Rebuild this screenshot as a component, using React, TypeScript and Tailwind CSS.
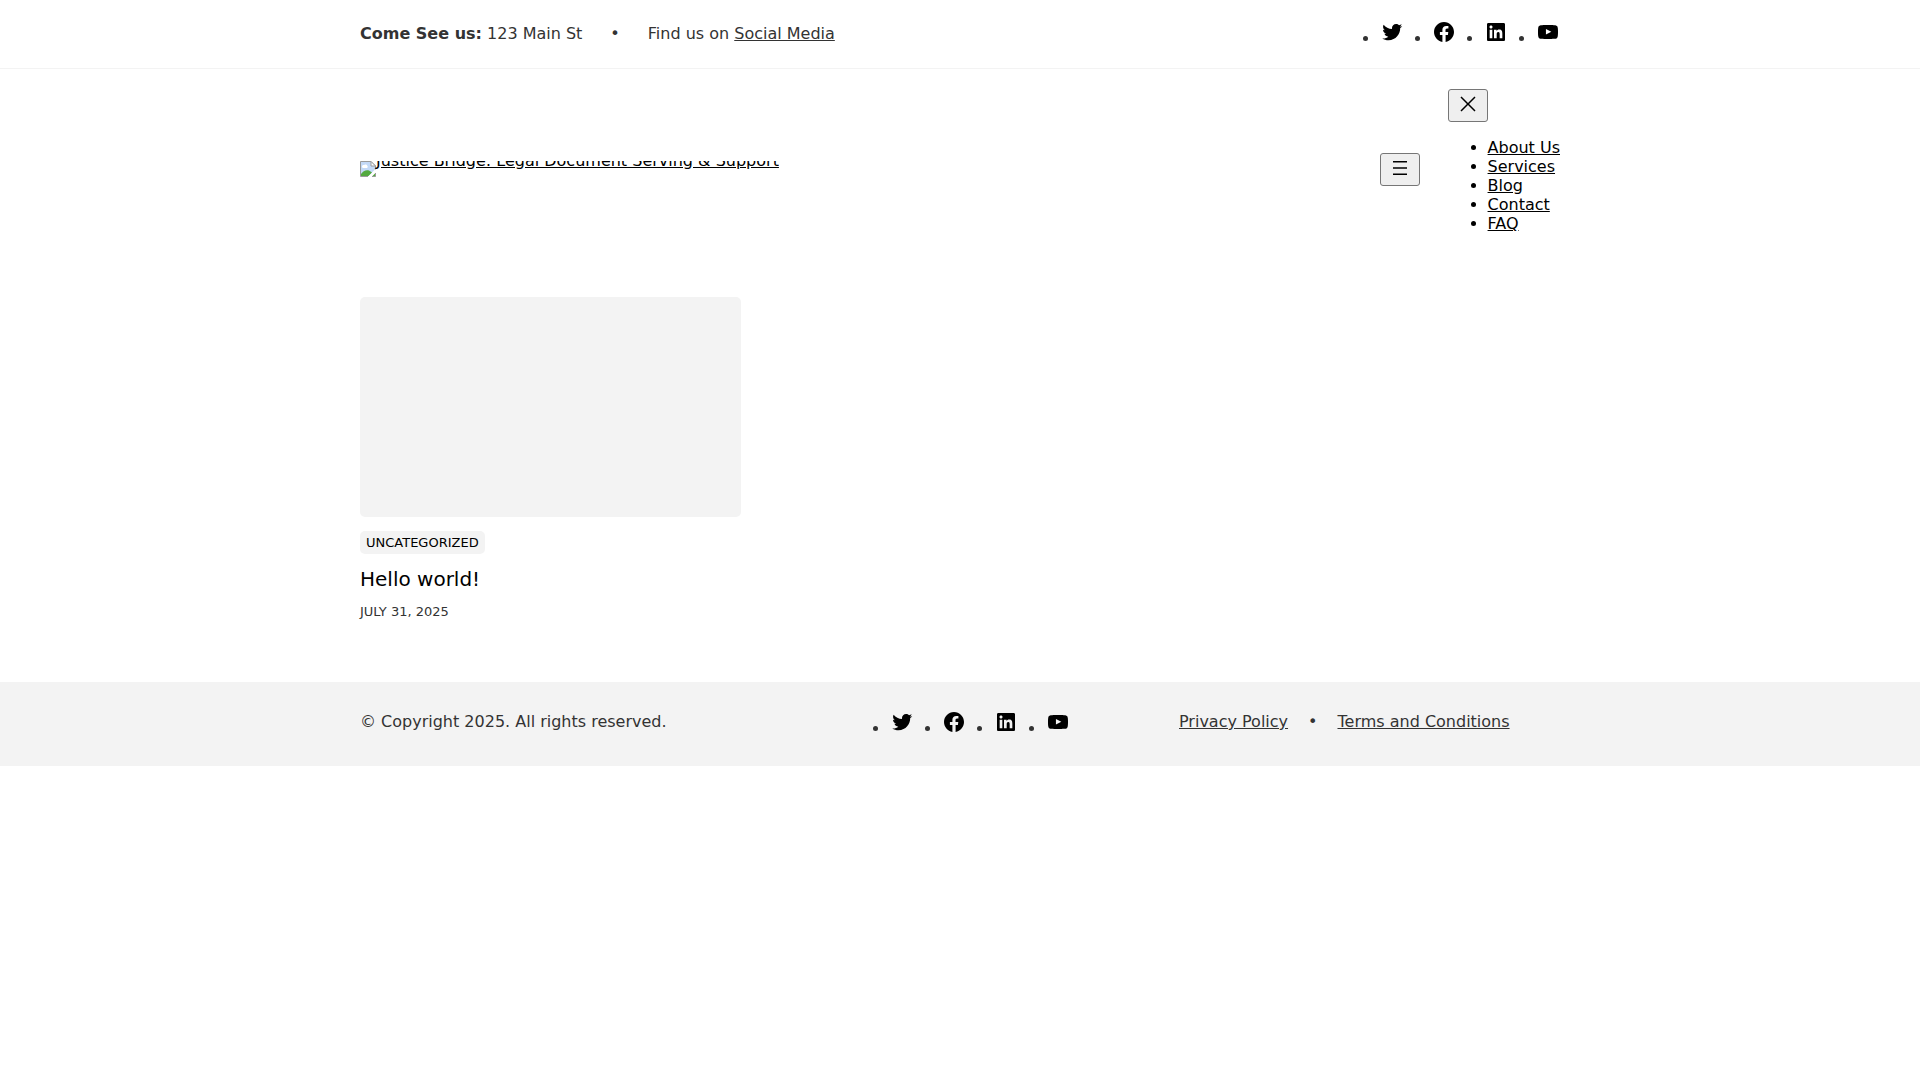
import React from "react";

const socials = [
  {
    name: "Twitter",
    path: "M22.23,5.924c-0.736,0.326-1.527,0.547-2.357,0.646c0.847-0.508,1.498-1.312,1.804-2.27 c-0.793,0.47-1.671,0.812-2.606,0.996C18.324,4.498,17.257,4,16.077,4c-2.266,0-4.103,1.837-4.103,4.103 c0,0.322,0.036,0.635,0.106,0.935C8.67,8.867,5.647,7.234,3.623,4.751C3.27,5.357,3.067,6.062,3.067,6.814 c0,1.424,0.724,2.679,1.825,3.415c-0.673-0.021-1.305-0.206-1.859-0.513c0,0.017,0,0.034,0,0.052c0,1.988,1.414,3.647,3.292,4.023 c-0.344,0.094-0.707,0.144-1.081,0.144c-0.264,0-0.521-0.026-0.772-0.074c0.522,1.63,2.038,2.816,3.833,2.85 c-1.404,1.1-3.174,1.756-5.096,1.756c-0.331,0-0.658-0.019-0.979-0.057c1.816,1.164,3.973,1.843,6.29,1.843 c7.547,0,11.675-6.252,11.675-11.675c0-0.178-0.004-0.355-0.012-0.531C20.985,7.47,21.68,6.747,22.23,5.924z",
  },
  {
    name: "Facebook",
    path: "M12 2C6.5 2 2 6.5 2 12c0 5 3.7 9.1 8.4 9.9v-7H7.9V12h2.5V9.8c0-2.5 1.5-3.9 3.8-3.9 1.1 0 2.2.2 2.2.2v2.5h-1.3c-1.2 0-1.6.8-1.6 1.6V12h2.8l-.4 2.9h-2.3v7C18.3 21.1 22 17 22 12c0-5.5-4.5-10-10-10z",
  },
  {
    name: "LinkedIn",
    path: "M19.7,3H4.3C3.582,3,3,3.582,3,4.3v15.4C3,20.418,3.582,21,4.3,21h15.4c0.718,0,1.3-0.582,1.3-1.3V4.3 C21,3.582,20.418,3,19.7,3z M8.339,18.338H5.667v-8.59h2.672V18.338z M7.004,8.574c-0.857,0-1.549-0.694-1.549-1.548 c0-0.855,0.691-1.548,1.549-1.548c0.854,0,1.547,0.694,1.547,1.548C8.551,7.881,7.858,8.574,7.004,8.574z M18.339,18.338h-2.669 v-4.177c0-0.996-0.017-2.278-1.387-2.278c-1.389,0-1.601,1.086-1.601,2.206v4.249h-2.667v-8.59h2.559v1.174h0.037 c0.356-0.675,1.227-1.387,2.526-1.387c2.703,0,3.203,1.779,3.203,4.092V18.338z",
  },
  {
    name: "YouTube",
    path: "M21.8,8.001c0,0-0.195-1.378-0.795-1.985c-0.76-0.797-1.613-0.801-2.004-0.847c-2.799-0.202-6.997-0.202-6.997-0.202 h-0.009c0,0-4.198,0-6.997,0.202C4.608,5.216,3.756,5.22,2.995,6.016C2.395,6.623,2.2,8.001,2.2,8.001S2,9.62,2,11.238v1.517 c0,1.618,0.2,3.237,0.2,3.237s0.195,1.378,0.795,1.985c0.761,0.797,1.76,0.771,2.205,0.855c1.6,0.153,6.8,0.201,6.8,0.201 s4.203-0.006,7.001-0.209c0.391-0.047,1.243-0.051,2.004-0.847c0.6-0.607,0.795-1.985,0.795-1.985s0.2-1.618,0.2-3.237v-1.517 C22,9.62,21.8,8.001,21.8,8.001z M9.935,14.594l-0.001-5.62l5.404,2.82L9.935,14.594z",
  },
];

const navItems = ["About Us", "Services", "Blog", "Contact", "FAQ"];

function SocialLinks() {
  return (
    <ul className="flex list-disc gap-7">
      {socials.map((s) => (
        <li key={s.name} className="h-7">
          <a href="#" aria-label={s.name} className="text-black">
            <svg viewBox="0 0 24 24" className="inline h-6 w-6 align-baseline" fill="currentColor" aria-hidden="true">
              <path d={s.path} />
            </svg>
          </a>
        </li>
      ))}
    </ul>
  );
}

function IconButton({ label, path }: { label: string; path: string }) {
  return (
    <button
      type="button"
      aria-label={label}
      className="flex h-[33px] w-10 justify-center rounded-[3px] border border-[#767676] bg-[#efefef] pt-0.5 text-black"
    >
      <svg viewBox="0 0 24 24" className="h-6 w-6" fill="currentColor" aria-hidden="true">
        <path d={path} />
      </svg>
    </button>
  );
}

function BrokenImageIcon() {
  return (
    <svg viewBox="0 0 16 16" className="h-4 w-4 shrink-0" aria-hidden="true">
      <path d="M0.5 0.5H11L15.5 5V8L8 15.5H0.5Z" fill="#c3d9f7" />
      <path d="M2 5.5a1.5 1.5 0 0 1 2-1.4 2 2 0 0 1 3.4 1A1.2 1.2 0 0 1 7 7H3a1.5 1.5 0 0 1-1-1.5Z" fill="#fff" />
      <path d="M1 15V13C3 10 6 8.5 9 9.5L12 11.5L8.5 15Z" fill="#53a93f" />
      <path d="M16 8.5V11L11 16H8Z" fill="#fff" />
      <path d="M15.5 12V15.5H12Z" fill="#53a93f" />
      <path d="M8 15.5H0.5V0.5H11L15.5 5V8.5M15.5 12V15.5H12" fill="none" stroke="#9a9a9a" />
      <path d="M11 0.5V5H15.5Z" fill="#fff" stroke="#9a9a9a" />
    </svg>
  );
}

export default function App() {
  return (
    <div className="min-h-screen bg-white font-['DejaVu_Sans',sans-serif] text-base leading-5 text-[#333333]">
      <div className="border-b border-[#f3f3f3]">
        <div className="mx-auto flex max-w-[1200px] items-center justify-between py-5">
          <div className="flex items-center gap-7">
            <p>
              <strong className="font-bold">Come See us:</strong> 123 Main St
            </p>
            <span>•</span>
            <p>
              Find us on{" "}
              <a href="#" className="underline">
                Social Media
              </a>
            </p>
          </div>
          <SocialLinks />
        </div>
      </div>

      <header className="mx-auto flex max-w-[1200px] items-center justify-between py-5 text-black">
        <a href="#" className="flex h-[17px] items-start overflow-hidden leading-[19px]">
          <BrokenImageIcon />
          <span className="-mt-2.5 underline">Justice Bridge: Legal Document Serving &amp; Support</span>
        </a>
        <nav className="flex items-center gap-7">
          <IconButton label="Open menu" path="M5 5v1.5h14V5H5zm0 7.8h14v-1.5H5v1.5zM5 19h14v-1.5H5V19z" />
          <div>
            <IconButton
              label="Close menu"
              path="m13.06 12 6.47-6.47-1.06-1.06L12 10.94 5.53 4.47 4.47 5.53 10.94 12l-6.47 6.47 1.06 1.06L12 13.06l6.47 6.47 1.06-1.06L13.06 12Z"
            />
            <ul className="my-4 list-disc pl-10 leading-[19px]">
              {navItems.map((item) => (
                <li key={item}>
                  <a href="#" className="underline">
                    {item}
                  </a>
                </li>
              ))}
            </ul>
          </div>
        </nav>
      </header>

      <main className="mx-auto grid max-w-[1200px] grid-cols-3 gap-7 pt-7 pb-15">
        <article>
          <a href="#" aria-label="Hello world!" className="block h-[220px] rounded-[5px] bg-[#f3f3f3]" />
          <a
            href="#"
            className="mt-3.5 inline-block rounded-[5px] bg-[#f3f3f3] px-1.5 py-0.5 text-[13px] leading-[19px] text-black uppercase"
          >
            Uncategorized
          </a>
          <h2 className="mt-3 text-xl leading-[26px] text-black">
            <a href="#">Hello world!</a>
          </h2>
          <time dateTime="2025-07-31" className="mt-2.5 block text-[13px] leading-5 uppercase">
            July 31, 2025
          </time>
        </article>
      </main>

      <footer className="bg-[#f3f3f3] py-7">
        <div className="mx-auto grid max-w-[1200px] grid-cols-[530fr_289fr_381fr] items-start">
          <p className="pt-0.5">© Copyright 2025. All rights reserved.</p>
          <SocialLinks />
          <div className="flex items-center gap-5 pt-0.5">
            <a href="#" className="underline">
              Privacy Policy
            </a>
            <span>•</span>
            <a href="#" className="underline">
              Terms and Conditions
            </a>
          </div>
        </div>
      </footer>
    </div>
  );
}
